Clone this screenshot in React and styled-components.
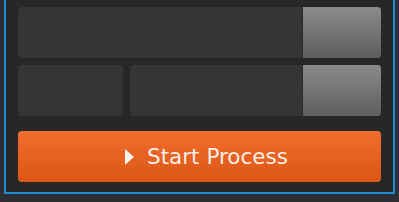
import styled, { createGlobalStyle } from "styled-components";

const Global = createGlobalStyle`
  html, body {
    margin: 0;
    padding: 0;
    background: #2c2e32;
  }
  body {
    font-family: "DejaVu Sans", Verdana, sans-serif;
  }
`;

// 바깥 패널 (위쪽 테두리는 화면 밖)
const Panel = styled.div`
  margin-left: 4px;
  width: 363px;
  background: #272727;
  border: 2px solid #1b8fd2;
  border-top: none;
  padding: 7px 12px 10px;
  display: flex;
  flex-direction: column;
  gap: 7px;
`;

const Row = styled.div`
  display: flex;
  gap: 7px;
  height: 51px;
  margin-bottom: ${(p) => (p.last ? "8px" : "0")};
`;

const Field = styled.div`
  display: flex;
  flex: 1;
  min-width: 0;
`;

const Input = styled.div`
  flex: ${(p) => (p.small ? "0 0 105px" : "1")};
  background: #353535;
  border-radius: ${(p) => (p.small ? "4px" : "4px 0 0 4px")};
`;

// 모서리 뒤로 파란색이 살짝 비침
const Corner = styled.div`
  display: flex;
  background: #1b6f9e;
  border-radius: ${(p) => p.radius || "0 4px 4px 0"};
  flex: ${(p) => p.flex || "none"};
`;

const Pick = styled.button`
  width: 79px;
  height: 51px;
  border: none;
  border-left: 1px solid #2a2a2a;
  border-radius: 0 4px 4px 0;
  background: linear-gradient(#8b8b8b, #5d5d5d);
  cursor: pointer;
  padding: 0;
`;

const Start = styled.button`
  flex: 1;
  height: 51px;
  border: none;
  border-radius: 4px;
  background: linear-gradient(#f26c2d, #dc5616);
  color: #fbeee6;
  font-family: "DejaVu Sans", Verdana, sans-serif;
  font-size: 21.5px;
  display: flex;
  align-items: center;
  justify-content: center;
  padding: 0 0 0 14px;
  cursor: pointer;
`;

const Play = styled.span`
  width: 0;
  height: 0;
  border-top: 8px solid transparent;
  border-bottom: 8px solid transparent;
  border-left: 9px solid #fdf3ec;
  margin-right: 13px;
  margin-top: 1px;
`;

export default function App() {
  return (
    <>
      <Global />
      <Panel>
        <Row>
          <Field>
            <Input />
            <Corner>
              <Pick />
            </Corner>
          </Field>
        </Row>
        <Row last>
          <Input small />
          <Field>
            <Input />
            <Corner>
              <Pick />
            </Corner>
          </Field>
        </Row>
        <Row>
          <Corner flex="1" radius="4px">
            <Start>
              <Play />
              Start Process
            </Start>
          </Corner>
        </Row>
      </Panel>
    </>
  );
}
